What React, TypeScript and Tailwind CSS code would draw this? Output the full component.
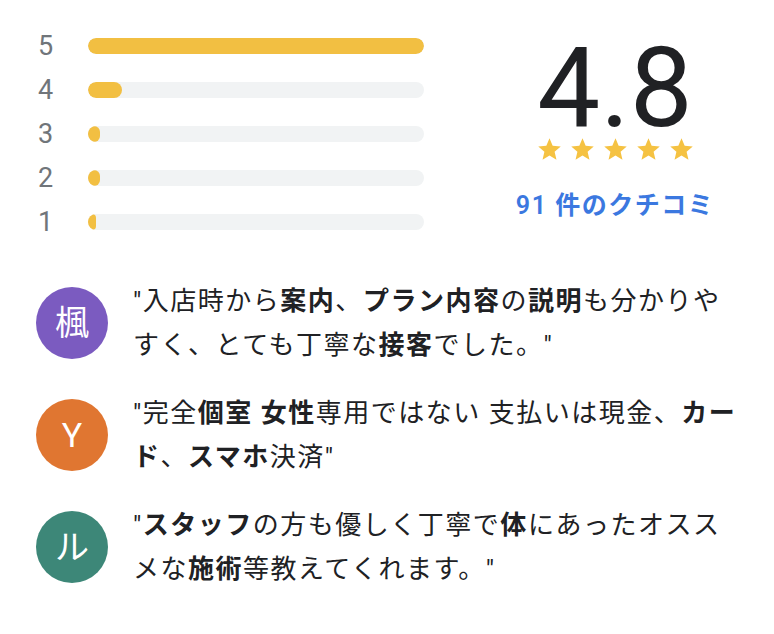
import React from 'react';

const bars = [
  { label: '5', width: 336 },
  { label: '4', width: 34 },
  { label: '3', width: 12 },
  { label: '2', width: 12 },
  { label: '1', width: 8 },
];

const Star: React.FC = () => (
  <svg width="27" height="27" viewBox="0 0 24 24" className="fill-[#f5c242]">
    <path d="M12 17.27L18.18 21l-1.64-7.03L22 9.24l-7.19-.61L12 2 9.19 8.63 2 9.24l5.46 4.73L5.82 21z" />
  </svg>
);

const reviews = [
  {
    initial: '楓',
    color: 'bg-[#7b5bc0]',
    body: (
      <>
        "入店時から<b className="font-bold">案内</b>、<b className="font-bold">プラン内容</b>の
        <b className="font-bold">説明</b>も分かりやすく、とても丁寧な<b className="font-bold">接客</b>でした。"
      </>
    ),
  },
  {
    initial: 'Y',
    color: 'bg-[#e07631]',
    body: (
      <>
        "完全<b className="font-bold">個室</b> <b className="font-bold">女性</b>専用ではない 支払いは現金、
        <b className="font-bold">カード</b>、<b className="font-bold">スマホ</b>決済"
      </>
    ),
  },
  {
    initial: 'ル',
    color: 'bg-[#3d8778]',
    body: (
      <>
        "<b className="font-bold">スタッフ</b>の方も優しく丁寧で<b className="font-bold">体</b>にあったオススメな
        <b className="font-bold">施術</b>等教えてくれます。"
      </>
    ),
  },
];

const App: React.FC = () => {
  return (
    <div className="w-[774px] h-[634px] bg-white overflow-hidden font-[Roboto,'Noto_Sans_CJK_JP',sans-serif]">
      {/* Rating summary */}
      <div className="flex pt-[38px] pl-[38px]">
        <div className="flex flex-col gap-[28px]">
          {bars.map((bar) => (
            <div key={bar.label} className="h-[16px] flex items-center">
              <span className="w-[50px] text-[27px] leading-none text-[#70757a]">{bar.label}</span>
              <div className="w-[336px] h-[16px] rounded-full bg-[#f1f3f4] overflow-hidden">
                <div className="h-full rounded-full bg-[#f2bf42]" style={{ width: bar.width }} />
              </div>
            </div>
          ))}
        </div>

        <div className="ml-[71px] w-[240px] flex flex-col items-center pt-[5px]">
          <div className="text-[112px] leading-[90px] text-[#202124]">4.8</div>
          <div className="mt-[3px] flex gap-[6px]">
            <Star />
            <Star />
            <Star />
            <Star />
            <Star />
          </div>
          <div className="mt-[25px] text-[25px] leading-[36px] tracking-[1.5px] font-semibold text-[#3b78e0]">
            91 件のクチコミ
          </div>
        </div>
      </div>

      {/* Reviews */}
      <div className="mt-[49px] pl-[36px] flex flex-col gap-[24px]">
        {reviews.map((r) => (
          <div key={r.initial} className="flex items-center gap-[25px]">
            <div
              className={`w-[72px] h-[72px] shrink-0 rounded-full flex items-center justify-center text-white text-[34px] ${r.color}`}
            >
              {r.initial}
            </div>
            <p className="w-[610px] text-[26px] leading-[44px] tracking-[1.5px] text-[#202124]">{r.body}</p>
          </div>
        ))}
      </div>
    </div>
  );
};

export default App;
